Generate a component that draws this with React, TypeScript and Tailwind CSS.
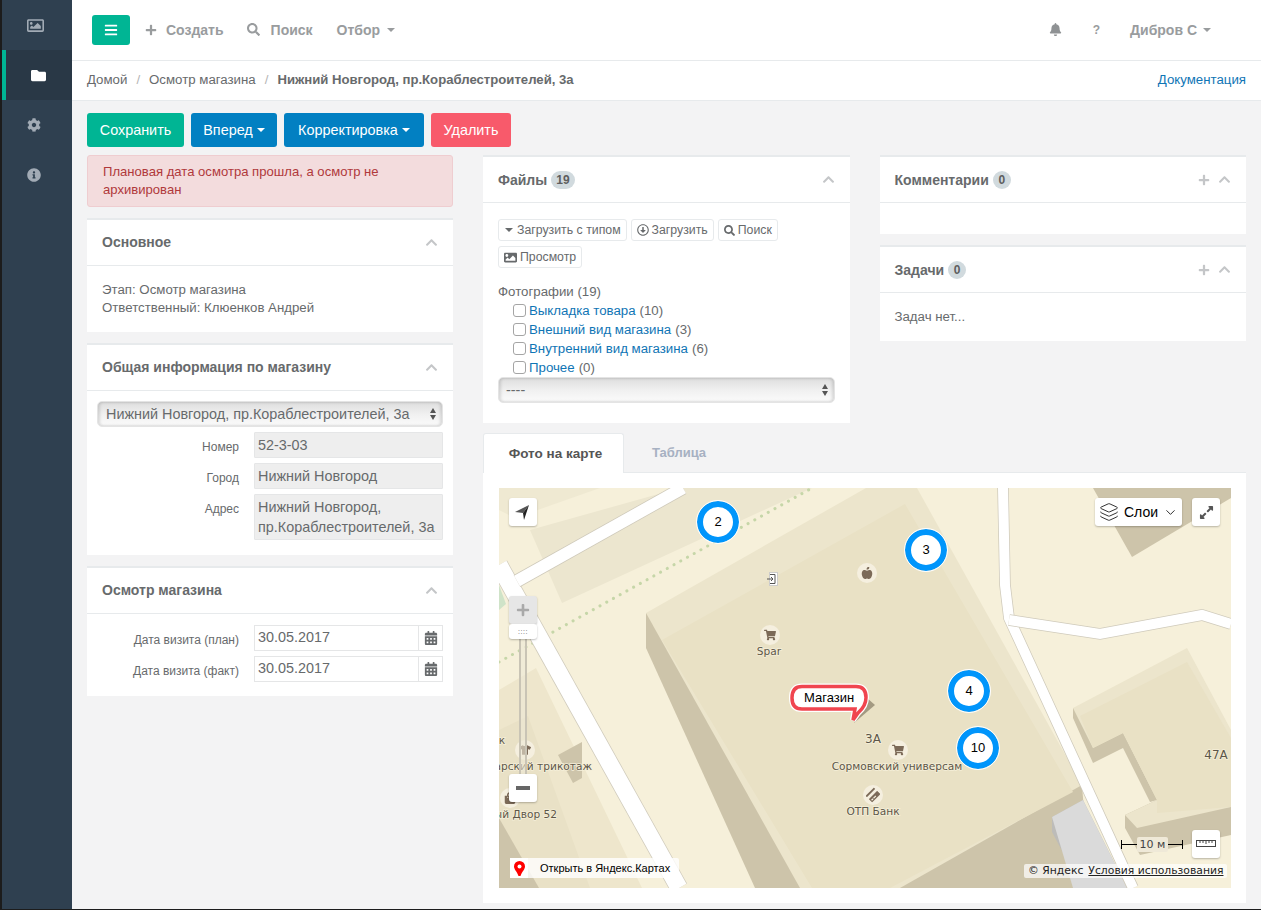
import { ReactNode } from 'react'
import {
  FaBars, FaBell, FaCalendarAlt, FaChevronUp, FaCog, FaCreditCard, FaFolder, FaImage, FaInfoCircle,
  FaPlus, FaRegArrowAltCircleDown, FaRegImage, FaSearch, FaShoppingBag, FaShoppingCart, FaTshirt, FaAppleAlt, FaExpandAlt,
} from 'react-icons/fa'
import { ChevronDown, Layers } from 'lucide-react'

const font = { fontFamily: '"Liberation Sans", Arial, sans-serif' }

function Caret({ className = '' }: { className?: string }) {
  return <span className={`inline-block w-0 h-0 border-x-[4px] border-x-transparent border-t-[4px] border-t-current ${className}`} />
}

function Badge({ n }: { n: number }) {
  return <span className="ml-[4px] inline-flex items-center justify-center h-[18px] min-w-[18px] px-[5px] rounded-full bg-[#d1dade] text-[12px] font-bold text-[#5e5e5e]">{n}</span>
}

function Panel({ title, badge, plus, children }: { title: string; badge?: number; plus?: boolean; children: ReactNode }) {
  return (
    <div className="bg-white border-t-2 border-[#e7eaec]">
      <div className="h-[46px] border-b border-[#e7eaec] flex items-center justify-between pl-[15px] pr-[15px]">
        <div className={`flex items-center text-[14px] font-bold text-[#676a6c] ${badge === undefined ? '-mt-[2px]' : ''}`}>
          {title}
          {badge !== undefined && <Badge n={badge} />}
        </div>
        <div className="flex items-center gap-[8px] text-[#c4c6c8]">
          {plus && <FaPlus className="text-[12px]" />}
          <FaChevronUp className="text-[13px]" />
        </div>
      </div>
      {children}
    </div>
  )
}

function AquaSelect({ text, className = '' }: { text: string; className?: string }) {
  return (
    <div className={`h-[26px] flex items-center justify-between pl-[8px] pr-[6px] rounded-[5px] bg-gradient-to-b from-[#dedede] via-[#f0f0f0] to-[#fbfbfb] border border-[#e4e4e4] shadow-[inset_2px_0_3px_rgba(0,0,0,0.12),inset_-2px_0_3px_rgba(0,0,0,0.12)] text-[14.4px] text-[#676a6c] ${className}`}>
      <span>{text}</span>
      <span className="flex flex-col gap-[2px] text-[#555]">
        <span className="w-0 h-0 border-x-[3.5px] border-x-transparent border-b-[5px] border-b-current" />
        <span className="w-0 h-0 border-x-[3.5px] border-x-transparent border-t-[5px] border-t-current" />
      </span>
    </div>
  )
}

function FormRow({ label, children }: { label: string; children: ReactNode }) {
  return (
    <div className="flex mb-[5px]">
      <label className="w-[152px] text-right text-[12px] leading-[14px] pt-[8px] text-[#676a6c] shrink-0">{label}</label>
      <div className="ml-[15px] w-[189px]">{children}</div>
    </div>
  )
}

function ReadOnly({ children }: { children: ReactNode }) {
  return <div className="bg-[#eeeeee] border border-[#e5e6e7] rounded-[1px] px-[3px] py-[2px] text-[14.4px] leading-[20px] text-[#676a6c]">{children}</div>
}

function DateField({ value }: { value: string }) {
  return (
    <div className="h-[26px] flex border border-[#e5e6e7] text-[14.4px] text-[#676a6c]">
      <div className="flex-1 px-[3px] leading-[22px]">{value}</div>
      <div className="w-[24px] border-l border-[#e5e6e7] flex items-center justify-center text-[#676a6c]"><FaCalendarAlt className="text-[14px]" /></div>
    </div>
  )
}

function SmallBtn({ children }: { children: ReactNode }) {
  return <button className="h-[22px] px-[5px] flex items-center gap-[3px] bg-white border border-[#e7eaec] rounded-[3px] text-[12.3px] text-[#676a6c]">{children}</button>
}

function Category({ name, count }: { name: string; count: number }) {
  return (
    <div className="flex items-center h-[19px] pl-[15px]">
      <span className="w-[13px] h-[13px] rounded-[3px] border border-[#a5a5a5] bg-white mr-[3px]" />
      <a className="text-[#0f75b5]">{name}</a>
      <span className="ml-[4px]">({count})</span>
    </div>
  )
}

function Cluster({ n, className }: { n: number; className: string }) {
  return (
    <div className={`absolute w-[42px] h-[42px] rounded-full bg-white border-[6px] border-[#0095fb] outline outline-1 outline-white flex items-center justify-center text-[13px] text-black ${className}`}>{n}</div>
  )
}

function Poi({ children, className }: { children: ReactNode; className: string }) {
  return <div className={`absolute w-[20px] h-[20px] rounded-full bg-[#f5efdf] flex items-center justify-center text-[#7c6a58] text-[12px] ${className}`}>{children}</div>
}

function MapCtl({ children, className }: { children: ReactNode; className: string }) {
  return <div className={`absolute h-[28px] bg-white rounded-[3px] shadow-[0_1px_2px_rgba(0,0,0,0.25)] flex items-center justify-center ${className}`}>{children}</div>
}

function MapLabel({ x, y, anchor = 'middle', size = 10.6, children }: { x: number; y: number; anchor?: 'middle' | 'start' | 'end'; size?: number; children: string }) {
  return (
    <text x={x} y={y} textAnchor={anchor} fontSize={size} fill="#5d5648" stroke="#f5efd9" strokeWidth={1.5} paintOrder="stroke" fontFamily='"DejaVu Sans", sans-serif'>{children}</text>
  )
}

function Road({ points, w = 14 }: { points: string; w?: number }) {
  return (
    <>
      <polyline points={points} fill="none" stroke="#cfcabb" strokeWidth={w + 1.5} />
      <polyline points={points} fill="none" stroke="#ffffff" strokeWidth={w} />
    </>
  )
}

function YandexMap() {
  return (
    <div className="relative w-[732px] h-[400px] overflow-hidden bg-[#f5efd9]">
      <svg className="absolute inset-0" width="732" height="400" viewBox="499 488 732 400">
        <rect x="499" y="488" width="732" height="400" fill="#f6f0da" />
        {/* shaded ground */}
        <polygon points="515,518 600,488 499,488 499,510" fill="#efe9d2" />
        <polygon points="530,530 562,603 812,488 680,488" fill="#ece6cf" />
        <polygon points="499,585 506,604 499,610" fill="#cfe3c8" />
        <polygon points="499,690 536,668 642,888 499,888" fill="#eee6cc" />
        <polygon points="499,730 528,716 590,888 499,888" fill="#e9e1c6" />
        <polygon points="558,755 582,742 582,778 573,783" fill="#cdc4aa" />
        <polygon points="499,818 539,888 499,888" fill="#cdc4aa" />
        <line x1="499" y1="662" x2="812" y2="488" stroke="#c6d6a8" strokeWidth="3" strokeLinecap="round" strokeDasharray="0.1 7.6" />
        {/* main building */}
        <polygon points="646,613 646,648 755,888 1090,888 1082,785" fill="#cdc4aa" />
        <polygon points="646,613 866,488 917,488 1082,785 900,888 800,888" fill="#ece5cc" />
        <polygon points="662,640 905,504 1073,792 890,888 812,888" fill="#e9e1c5" />
        {/* grey building */}
        <polygon points="1052,817 1052,832 1082,888 1127,888 1083,800" fill="#bdbcb9" />
        <polygon points="1052,817 1083,800 1127,888 1073,888" fill="#dadada" />
        {/* top right building */}
        <polygon points="1093,488 1132,557 1231,498 1231,488" fill="#cdc4aa" />
        {/* 47A */}
        <polygon points="1073,708 1073,718 1093,763 1123,748 1150,802 1157,800 1125,815 1125,828 1140,855 1231,835 1231,730" fill="#cdc4aa" />
        <polygon points="1073,708 1187,648 1231,730 1231,807 1137,828 1125,815 1157,800 1123,733 1093,748" fill="#ece5cc" />
        <polygon points="1080,716 1187,662 1231,738 1231,807 1157,813 1157,800 1123,733 1093,748" fill="#e9e1c5" />
        {/* roads */}
        <Road points="499,565 679,888" w={17} />
        <Road points="517,581 683,488" w={12} />
        <Road points="1003,488 1005,585 1009,618 1133,888" w={10} />
        <Road points="1009,620 1100,634 1202,615 1231,624" w={10} />
        {/* labels */}
        <MapLabel x={769} y={655}>Spar</MapLabel>
        <MapLabel x={502} y={744}>к</MapLabel>
        <MapLabel x={592} y={770} anchor="end">арский трикотаж</MapLabel>
        <MapLabel x={557} y={818} anchor="end">ый Двор 52</MapLabel>
        <MapLabel x={897} y={770}>Сормовский универсам</MapLabel>
        <MapLabel x={873} y={815}>ОТП Банк</MapLabel>
        <MapLabel x={873} y={743} size={12}>3А</MapLabel>
        <MapLabel x={1216} y={759} size={12}>47А</MapLabel>
      </svg>

      <div className="absolute left-[268px] top-[84px]">
        <svg width="11" height="14" viewBox="0 0 11 14" fill="none" stroke="#555">
          <rect x="2.500" y="0.500" width="8" height="13" fill="#fff" stroke="#ccc" />
          <path d="M0 7h6M4 5l2 2-2 2M3 2.500h5v9H3" />
        </svg>
      </div>
      <Poi className="left-[261px] top-[137px]"><FaShoppingCart /></Poi>
      <Poi className="left-[358px] top-[75px]"><FaAppleAlt /></Poi>
      <Poi className="left-[389px] top-[252px]"><FaShoppingCart /></Poi>
      <Poi className="left-[364px] top-[297px]"><FaCreditCard className="-rotate-45" /></Poi>
      <Poi className="left-[16px] top-[252px]"><FaTshirt /></Poi>
      <Poi className="left-[1px] top-[300px]"><FaShoppingBag /></Poi>

      {/* red label */}
      <svg className="absolute left-[285px] top-[192px]" width="100" height="50" viewBox="0 0 100 50">
        <polygon points="70,43 91,25 83,18" fill="#a39a82" />
        <path d="M18 6.500 H72 Q82 6.500 82 17.500 Q82 26 74 33 L69 40 L71 29 H18 Q8 29 8 18 Q8 6.500 18 6.500 Z" fill="#fff" stroke="#fff" strokeWidth="6" />
        <path d="M18 6.500 H72 Q82 6.500 82 17.500 Q82 26 74 33 L69 40 L71 29 H18 Q8 29 8 18 Q8 6.500 18 6.500 Z" fill="#fff" stroke="#f0454f" strokeWidth="3.500" />
      </svg>
      <span className="absolute left-[305px] top-[202px] text-[13px] leading-[16px] text-black">Магазин</span>

      <Cluster n={2} className="left-[198px] top-[13px]" />
      <Cluster n={3} className="left-[406px] top-[41px]" />
      <Cluster n={4} className="left-[449px] top-[182px]" />
      <Cluster n={10} className="left-[458px] top-[239px]" />

      {/* controls */}
      <MapCtl className="left-[10px] top-[10px] w-[28px]">
        <svg width="28" height="28" viewBox="0 0 28 28">
          <polygon points="20,7 6,14 14,15" fill="#555" />
          <polygon points="20,7 14,15 15,22" fill="#222" />
        </svg>
      </MapCtl>
      <MapCtl className="left-[596px] top-[10px] w-[87px] text-[14px] text-black gap-[5px]">
        <Layers size={20} strokeWidth={1.2} className="text-[#333]" />
        <span>Слои</span>
        <ChevronDown size={15} strokeWidth={1.3} />
      </MapCtl>
      <MapCtl className="left-[693px] top-[10px] w-[28px]"><FaExpandAlt className="text-[15px] text-[#555]" /></MapCtl>
      <MapCtl className="left-[693px] top-[342px] w-[28px]">
        <svg width="20" height="8" viewBox="0 0 20 8" fill="none" stroke="#444"><rect x="0.500" y="0.500" width="19" height="6" /><path d="M4 1v2M7 1v2M10 1v3M13 1v2M16 1v2" /></svg>
      </MapCtl>
      <div className="absolute left-[20px] top-[151px] w-[8px] h-[136px] border-x-2 border-[#c9c4b5] bg-[#ece7d6]/60" />
      <MapCtl className="left-[10px] top-[108px] w-[28px] !bg-[#e6e6e6]"><FaPlus className="text-[14px] text-[#a9a9a9]" /></MapCtl>
      <MapCtl className="left-[10px] top-[136px] w-[28px] !h-[15px] text-[7px] leading-none text-[#555] tracking-[0.5px]">::::</MapCtl>
      <MapCtl className="left-[10px] top-[286px] w-[28px]"><span className="w-[14px] h-[4px] bg-[#666]" /></MapCtl>

      <div className="absolute left-[11px] top-[370px] h-[20px] w-[169px] flex items-center bg-white/80 rounded-[2px] text-[11px] text-black">
        <span className="w-[18px] h-[20px] bg-white flex items-center justify-center">
          <svg width="11" height="15" viewBox="0 0 11 15"><path d="M5.500 0a5.500 5.500 0 0 1 5.500 5.500c0 3-3 5-4.500 9.500h-2C3 10.500 0 8.500 0 5.500A5.500 5.500 0 0 1 5.500 0z" fill="#f00" /><circle cx="5.500" cy="5.500" r="2" fill="#fff" /></svg>
        </span>
        <span className="ml-[12px]">Открыть в Яндекс.Картах</span>
      </div>

      <div className="absolute left-[622px] top-[352px] w-[62px] h-[9px] border-x border-black flex items-center">
        <span className="w-full h-px bg-black" />
      </div>
      <span className="absolute left-[638px] top-[349px] w-[31px] h-[15px] rounded-[2px] bg-[#efe9d8] text-center text-[11px] leading-[15px] text-[#444]" style={{ fontFamily: '"DejaVu Sans", sans-serif' }}>10 м</span>

      <div className="absolute left-[525px] top-[376px] h-[14px] w-[203px] px-[4px] flex items-center gap-[5px] whitespace-nowrap bg-white/70 rounded-[2px] text-[10.8px] leading-none text-[#222]" style={{ fontFamily: '"DejaVu Sans", sans-serif' }}>
        <span>© Яндекс</span>
        <span className="underline">Условия использования</span>
      </div>
    </div>
  )
}

export default function App() {
  return (
    <div className="flex w-[1261px] h-[910px] overflow-hidden bg-[#f3f3f4] border-b border-[#1c1c1c] text-[13.25px] leading-[18px] text-[#676a6c]" style={font}>
      {/* sidebar */}
      <aside className="w-[72px] shrink-0 bg-[#2f4050] border-l-2 border-[#1c1c1c] text-[#a2abb5]">
        <div className="h-[50px] flex items-center pl-[25px]"><FaRegImage className="text-[17px]" /></div>
        <div className="h-[50px] flex items-center pl-[25px] bg-[#293846] border-l-4 border-[#00b594] text-white"><FaFolder className="text-[15px]" /></div>
        <div className="h-[50px] flex items-center pl-[25px]"><FaCog className="text-[14px]" /></div>
        <div className="h-[50px] flex items-center pl-[25px]"><FaInfoCircle className="text-[14px]" /></div>
      </aside>

      <div className="flex-1 min-w-0">
        {/* top bar */}
        <header className="h-[61px] bg-white border-b border-[#e7eaec] flex items-center justify-between pl-[20px] pr-[50px] pb-[1px] text-[14px] font-bold text-[#999c9e]">
          <div className="flex items-center">
            <button className="w-[38px] h-[30px] rounded-[3px] bg-[#00b594] flex items-center justify-center text-white"><FaBars className="text-[14px]" /></button>
            <FaPlus className="ml-[15px] text-[12px]" />
            <span className="ml-[9px]">Создать</span>
            <FaSearch className="ml-[23px] text-[13px]" />
            <span className="ml-[11px]">Поиск</span>
            <span className="ml-[24px]">Отбор</span>
            <Caret className="ml-[7px]" />
          </div>
          <div className="flex items-center">
            <FaBell className="text-[13px] text-[#8f9294]" />
            <span className="ml-[31px] text-[12px]">?</span>
            <span className="ml-[30px]">Дибров С</span>
            <Caret className="ml-[6px]" />
          </div>
        </header>

        {/* breadcrumb */}
        <div className="h-[40px] bg-white border-b border-[#e7eaec] flex items-center justify-between pl-[15px] pr-[15px] pb-[2px]">
          <div className="flex items-center">
            <span>Домой</span>
            <span className="mx-[9px] text-[#b5b5b5]">/</span>
            <span>Осмотр магазина</span>
            <span className="mx-[9px] text-[#b5b5b5]">/</span>
            <span className="font-bold text-[13.15px]">Нижний Новгород, пр.Кораблестроителей, 3а</span>
          </div>
          <a className="text-[#0f75b5]">Документация</a>
        </div>

        <main className="pl-[15px] pr-[15px]">
          {/* actions */}
          <div className="flex gap-[7px] pt-[12px] pb-[8px] text-[14.4px] text-white">
            <button className="h-[34px] w-[97px] rounded-[3px] bg-[#00b594]">Сохранить</button>
            <button className="h-[34px] w-[86px] rounded-[3px] bg-[#0280c2] flex items-center justify-center gap-[4px]">Вперед <Caret /></button>
            <button className="h-[34px] w-[140px] rounded-[3px] bg-[#0280c2] flex items-center justify-center gap-[4px]">Корректировка <Caret /></button>
            <button className="h-[34px] w-[80px] rounded-[3px] bg-[#f85a6b]">Удалить</button>
          </div>

          <div className="flex gap-[30px]">
            {/* left column */}
            <div className="w-[366px] shrink-0 flex flex-col gap-[11px]">
              <div className="h-[52px] bg-[#f3dcdd] border border-[#efcdd0] rounded-[3px] px-[15px] py-[7px] text-[13.1px] text-[#b0393b]">
                Плановая дата осмотра прошла, а осмотр не архивирован
              </div>
              <Panel title="Основное">
                <div className="h-[66px] pt-[15px] px-[15px]">
                  <div>Этап: Осмотр магазина</div>
                  <div>Ответственный: Клюенков Андрей</div>
                </div>
              </Panel>
              <Panel title="Общая информация по магазину">
                <div className="h-[164px] pt-[10px]">
                  <AquaSelect text="Нижний Новгород, пр.Кораблестроителей, 3а" className="mx-[10px] mb-[5px]" />
                  <FormRow label="Номер"><ReadOnly>52-3-03</ReadOnly></FormRow>
                  <FormRow label="Город"><ReadOnly>Нижний Новгород</ReadOnly></FormRow>
                  <FormRow label="Адрес"><ReadOnly>Нижний Новгород, пр.Кораблестроителей, 3а</ReadOnly></FormRow>
                </div>
              </Panel>
              <Panel title="Осмотр магазина">
                <div className="h-[82px] pt-[11px]">
                  <FormRow label="Дата визита (план)"><DateField value="30.05.2017" /></FormRow>
                  <FormRow label="Дата визита (факт)"><DateField value="30.05.2017" /></FormRow>
                </div>
              </Panel>
            </div>

            {/* right part */}
            <div className="flex-1 min-w-0">
              <div className="grid grid-cols-2 gap-[30px]">
                <Panel title="Файлы" badge={19}>
                  <div className="h-[220px] px-[15px] pt-[16px]">
                    <div className="flex flex-wrap gap-x-[4px] gap-y-[5px]">
                      <SmallBtn><Caret className="mx-[1px]" /> Загрузить с типом</SmallBtn>
                      <SmallBtn><FaRegArrowAltCircleDown className="text-[12px]" /> Загрузить</SmallBtn>
                      <SmallBtn><FaSearch className="text-[11px]" /> Поиск</SmallBtn>
                      <SmallBtn><FaImage className="text-[13px]" /> Просмотр</SmallBtn>
                    </div>
                    <div className="mt-[14px] leading-[19px]">Фотографии (19)</div>
                    <Category name="Выкладка товара" count={10} />
                    <Category name="Внешний вид магазина" count={3} />
                    <Category name="Внутренний вид магазина" count={6} />
                    <Category name="Прочее" count={0} />
                    <AquaSelect text="----" className="w-[337px] !pl-[7px]" />
                  </div>
                </Panel>
                <div className="flex flex-col gap-[11px]">
                  <Panel title="Комментарии" badge={0} plus>
                    <div className="h-[31px]" />
                  </Panel>
                  <Panel title="Задачи" badge={0} plus>
                    <div className="h-[48px] px-[15px] pt-[15px]">Задач нет...</div>
                  </Panel>
                </div>
              </div>

              {/* tabs */}
              <div className="mt-[10px] flex h-[40px] font-bold">
                <div className="w-[141px] pl-[4px] bg-white border border-b-0 border-[#e7eaec] rounded-t-[3px] flex items-center justify-center text-[13.5px] text-[#555]">Фото на карте</div>
                <div className="w-[110px] flex items-center justify-center text-[13px] text-[#a7b1c2]">Таблица</div>
              </div>
              <div className="bg-white border-t border-[#e7eaec] px-[16px] pt-[15px] pb-[15px] -mt-px">
                <YandexMap />
              </div>
            </div>
          </div>
        </main>
      </div>
    </div>
  )
}
